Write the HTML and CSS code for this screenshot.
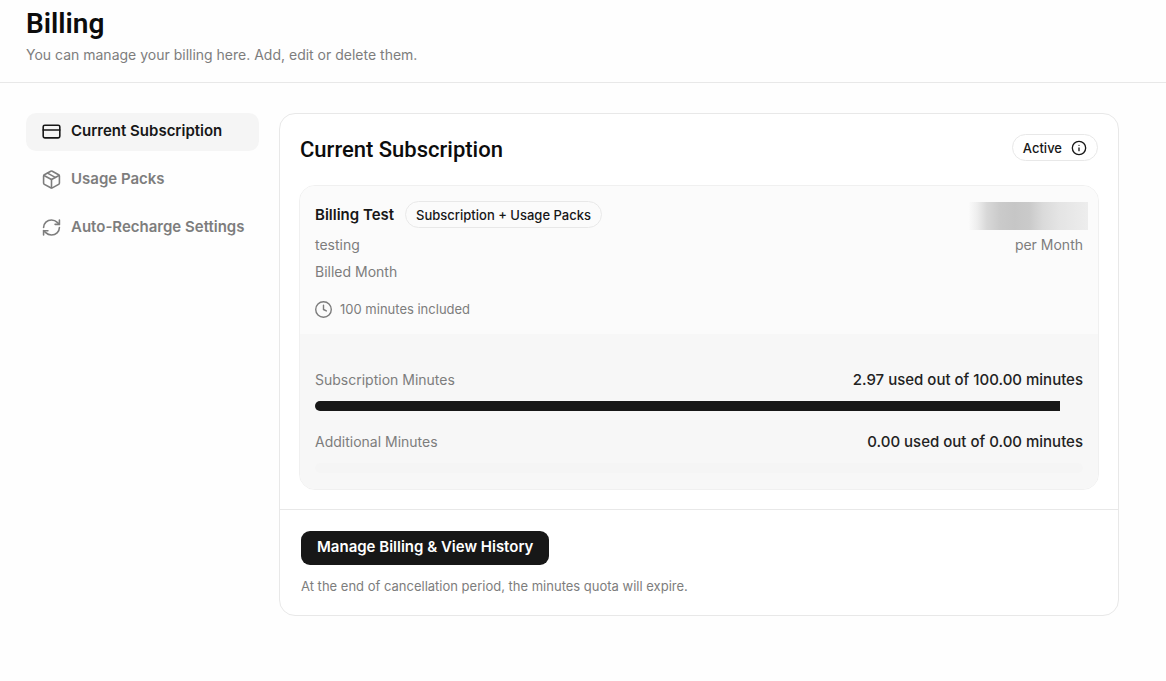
FILE: index.html
```html
<!DOCTYPE html>
<html lang="en">
<head>
    <meta charset="UTF-8">
    <meta name="viewport" content="width=device-width, initial-scale=1.0">
    <title>Billing</title>
    <link rel="stylesheet" href="styles.css">
</head>
<body>
    <header class="page-header">
        <h1>Billing</h1>
        <p>You can manage your billing here. Add, edit or delete them.</p>
    </header>

    <div class="container">
        <!-- Side menu -->
        <nav class="menu">
            <a href="#" class="menu-item active">
                <svg class="icon" viewBox="0 0 24 24"><rect x="1.5" y="4" width="21" height="16" rx="2"/><path d="M1.5 10h21"/></svg>
                Current Subscription
            </a>
            <a href="#" class="menu-item">
                <svg class="icon" viewBox="0 0 24 24"><path d="M11 22.500a2 2 0 0 0 2 0l8-4.400a2 2 0 0 0 1-1.700V7.700a2 2 0 0 0-1-1.700l-8-4.400a2 2 0 0 0-2 0L3 6a2 2 0 0 0-1 1.700v8.700a2 2 0 0 0 1 1.700z"/><path d="M12 22.500V12"/><path d="M2.500 7 12 12l9.500-5"/><path d="m7 4 9.700 5.300"/></svg>
                Usage Packs
            </a>
            <a href="#" class="menu-item">
                <svg class="icon" viewBox="0 0 24 24"><path d="M2 12a10 9.500 0 0 1 10-9.500 10.500 10 0 0 1 7.300 3L22 8"/><path d="M22 2.500V8h-5.500"/><path d="M22 12a10 9.500 0 0 1-10 9.500 10.500 10 0 0 1-7.300-3L2 16"/><path d="M7.500 16H2v5.500"/></svg>
                Auto-Recharge Settings
            </a>
        </nav>

        <main class="card">
            <div class="card-body">
                <div class="card-top">
                    <h2>Current Subscription</h2>
                    <span class="badge">
                        Active
                        <svg class="icon icon-small" viewBox="0 0 24 24"><circle cx="12" cy="12" r="10"/><path d="M12 16v-4"/><path d="M12 8h.01"/></svg>
                    </span>
                </div>

                <div class="panel">
                    <!-- Plan -->
                    <div class="plan">
                        <div class="plan-info">
                            <div class="plan-name">
                                <h3>Billing Test</h3>
                                <span class="badge">Subscription + Usage Packs</span>
                            </div>
                            <p>testing</p>
                            <p>Billed Month</p>
                            <div class="included">
                                <svg class="icon icon-clock" viewBox="0 0 24 24"><circle cx="12" cy="12" r="11"/><path d="M12 6v6l4 2"/></svg>
                                100 minutes included
                            </div>
                        </div>
                        <div class="plan-price">
                            <div class="price-hidden"></div>
                            <p>per Month</p>
                        </div>
                    </div>

                    <!-- Minutes -->
                    <div class="usage">
                        <div class="row">
                            <span>Subscription Minutes</span>
                            <strong>2.97 used out of 100.00 minutes</strong>
                        </div>
                        <div class="bar"><div class="bar-fill" style="width: 97%"></div></div>
                        <div class="row">
                            <span>Additional Minutes</span>
                            <strong>0.00 used out of 0.00 minutes</strong>
                        </div>
                        <div class="bar"></div>
                    </div>
                </div>
            </div>

            <div class="card-footer">
                <button type="button" class="btn">Manage Billing &amp; View History</button>
                <p>At the end of cancellation period, the minutes quota will expire.</p>
            </div>
        </main>
    </div>
</body>
</html>
```
FILE: styles.css
```css
* {
    box-sizing: border-box;
}

body {
    margin: 0;
    background: #fefefe;
    color: #171717;
    font-family: Inter, "Liberation Sans", sans-serif;
    font-size: 14px;
    line-height: 20px;
}

h1, h2, h3, p {
    margin: 0;
}

.page-header {
    padding: 8px 26px 17px;
    border-bottom: 1px solid #e8e8e8;
    color: #7d7d7d;
}

h1 {
    color: #0c0c0c;
    font-family: Roboto, sans-serif;
    font-size: 28px;
    font-weight: 600;
    line-height: 32px;
    margin-bottom: 5px;
}

h2 {
    color: #0c0c0c;
    font-family: Roboto, sans-serif;
    font-size: 22px;
    font-weight: 500;
    line-height: 32px;
}

h3 {
    font-size: 15px;
    font-weight: 600;
}

.container {
    display: flex;
    align-items: flex-start;
    gap: 20px;
    padding: 30px 47px 30px 26px;
}

.menu {
    display: flex;
    flex-direction: column;
    gap: 10px;
    width: 233px;
    flex-shrink: 0;
}

.menu-item {
    display: flex;
    align-items: center;
    gap: 10px;
    padding: 8px 16px 10px;
    border-radius: 10px;
    color: #7d7d7d;
    font-size: 15px;
    font-weight: 600;
    text-decoration: none;
    white-space: nowrap;
}

.menu-item.active {
    background: #f5f5f5;
    color: #171717;
}

.icon {
    width: 19px;
    height: 19px;
    flex-shrink: 0;
    fill: none;
    stroke: currentColor;
    stroke-width: 2;
    stroke-linecap: round;
    stroke-linejoin: round;
}

.icon-small {
    width: 16px;
    height: 16px;
}

.icon-clock {
    width: 17px;
    height: 17px;
}

.card {
    flex: 1;
    min-width: 0;
    background: #fff;
    border: 1px solid #e8e8e8;
    border-radius: 16px;
}

.card-body {
    padding: 20px 19px 19px;
}

.row {
    display: flex;
    align-items: center;
    justify-content: space-between;
}

.card-top {
    display: flex;
    align-items: flex-start;
    justify-content: space-between;
    padding: 0 1px;
    margin-bottom: 19px;
}

.badge {
    display: flex;
    align-items: center;
    gap: 9px;
    height: 27px;
    padding: 0 10px;
    border: 1px solid #e8e8e8;
    border-radius: 14px;
    font-size: 13px;
    font-weight: 500;
}

.panel {
    border: 1px solid #f0f0f0;
    border-radius: 16px;
    overflow: hidden;
    color: #7d7d7d;
}

.plan {
    display: flex;
    justify-content: space-between;
    padding: 15px;
    background: #fbfbfb;
}

.plan-name {
    display: flex;
    align-items: center;
    gap: 11px;
    color: #171717;
    margin-bottom: 7px;
}

.plan-info p {
    margin-bottom: 7px;
}

.included {
    display: flex;
    align-items: center;
    gap: 8px;
    margin-top: 17px;
    font-size: 13px;
}

.plan-price {
    text-align: right;
}

/* blurred out amount */
.price-hidden {
    width: 122px;
    height: 28px;
    margin: 1px -5px 5px 0;
    background: linear-gradient(90deg, #fbfbfb 2%, #eee 9%, #d8d8d8 17%, #cacaca 28%, #c6c6c6 40%, #cacaca 52%, #dadada 63%, #e4e4e4 76%, #ededed);
}

.usage {
    padding: 36px 15px 10px;
    background: #f7f7f7;
}

.usage strong {
    color: #222;
    font-size: 15px;
    font-weight: 500;
}

.bar {
    height: 10px;
    margin: 11px 0 21px;
    border-radius: 5px;
    overflow: hidden;
}

.bar:last-child {
    margin-bottom: 6px;
    background: #f5f5f5;
}

.bar-fill {
    height: 100%;
    background: #171717;
}

.card-footer {
    padding: 21px 21px 19px;
    border-top: 1px solid #e8e8e8;
    color: #7d7d7d;
    font-size: 13px;
}

.btn {
    display: block;
    padding: 6px 16px 8px;
    margin-bottom: 11px;
    background: #171717;
    color: #fff;
    border: none;
    border-radius: 9px;
    font-family: inherit;
    font-size: 15px;
    font-weight: 600;
    line-height: 20px;
    cursor: pointer;
}

.btn:hover {
    background: #333;
}
```
